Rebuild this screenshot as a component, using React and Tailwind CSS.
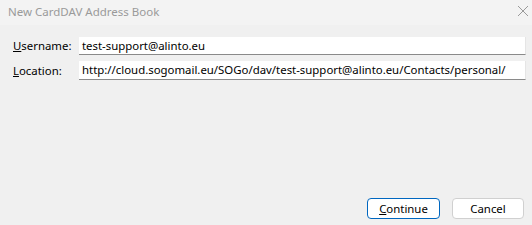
export default function App() {
  const font = { fontFamily: '"Noto Sans", sans-serif' };
  return (
    <div className="w-[532px] h-[225px] bg-[#f0f0f0] flex flex-col text-[11.4px] text-black" style={font}>
      <div className="h-[25px] bg-[#f3f3f3] flex items-center justify-between pl-[8px] pr-[2px]">
        <span className="text-[#9a9a9a] text-[11.5px] leading-none mb-[1px]">New CardDAV Address Book</span>
        <svg width="12" height="12" viewBox="0 0 12 12" className="mr-[1px] mb-[4px]">
          <path d="M1 1L11 11M11 1L1 11" stroke="#9a9a9a" strokeWidth="1" />
        </svg>
      </div>
      <div className="flex flex-col gap-[6px] pt-[12px] pl-[13px] pr-[6px]">
        <div className="flex items-center">
          <span className="w-[66px] shrink-0 whitespace-nowrap"><u>U</u>sername:</span>
          <div className="flex-1 h-[18px] bg-white border-b border-r border-b-[#8a8a8a] border-r-[#e5e5e5] flex items-center pl-[3px] leading-none whitespace-nowrap">
            test-support@alinto.eu
          </div>
        </div>
        <div className="flex items-center">
          <span className="w-[66px] shrink-0 whitespace-nowrap"><u>L</u>ocation:</span>
          <div className="flex-1 h-[19px] bg-white border-b border-r border-b-[#8a8a8a] border-r-[#e5e5e5] flex items-center pl-[3px] leading-none whitespace-nowrap overflow-hidden">
            http://cloud.sogomail.eu/SOGo/dav/test-support@alinto.eu/Contacts/personal/
          </div>
        </div>
      </div>
      <div className="flex-1" />
      <div className="flex justify-end gap-[12px] pr-[8px] pb-[6px]">
        <button className="w-[73px] h-[21px] rounded-[4px] border border-[#0067c0] bg-white leading-none">
          <u>C</u>ontinue
        </button>
        <button className="w-[72px] h-[21px] rounded-[4px] border border-[#d0d0d0] bg-white leading-none">
          Cancel
        </button>
      </div>
    </div>
  );
}
